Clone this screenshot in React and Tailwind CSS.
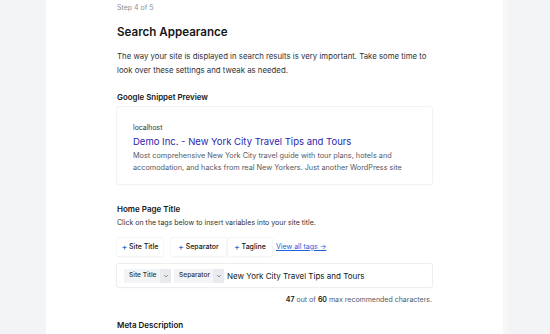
export default function App() {
  return (
    <div
      className="flex h-[334px] w-[550px] overflow-hidden bg-[#f3f4f6]"
      style={{ fontFamily: 'Inter, "Liberation Sans", sans-serif' }}
    >
      <div className="ml-[46px] w-[457px] shrink-0 bg-white pl-[71px] pt-[3px]">
        <div className="w-[315px]">
          <p className="text-[7px] leading-[10px] text-[#8a8f98]">Step 4 of 5</p>
          <h1 className="mt-[11px] text-[11.6px] font-semibold leading-[16px] text-[#141618]">Search Appearance</h1>
          <p className="mt-[9px] text-[7.8px] leading-[14px] text-[#2f3237]">
            The way your site is displayed in search results is very important. Take some time to look over these settings and tweak as needed.
          </p>

          <h2 className="mt-[15px] text-[7.9px] font-semibold leading-[10px] text-[#141618]">Google Snippet Preview</h2>
          <div className="mt-[5px] h-[77px] rounded-[2px] px-[16px] pt-[16px] shadow-[0_0_0_1px_#f2f3f5,0_1px_3px_rgba(0,0,0,0.03)]">
            <p className="text-[6.9px] leading-[10px] text-[#2f3237]">localhost</p>
            <p className="mt-[1.5px] text-[9.5px] leading-[13px] text-[#2a1fb0]">Demo Inc. - New York City Travel Tips and Tours</p>
            <p className="mt-[2.5px] text-[7.3px] leading-[12px] text-[#55595f]">
              Most comprehensive New York City travel guide with tour plans, hotels and accomodation, and hacks from real New Yorkers. Just another WordPress site
            </p>
          </div>

          <h2 className="mt-[20px] text-[8px] font-semibold leading-[10px] text-[#141618]">Home Page Title</h2>
          <p className="mt-[4px] text-[7px] leading-[10px] text-[#2f3237]">Click on the tags below to insert variables into your site title.</p>

          <div className="mt-[10px] flex items-center">
            <Tag label="Site Title" w="w-[46px]" />
            <Tag label="Separator" w="w-[55px] ml-[8px]" />
            <Tag label="Tagline" w="w-[44px] ml-[2px]" />
            <span className="ml-[4px] text-[7px] text-[#1b64d8] underline">View all tags →</span>
          </div>

          <div className="mt-[8px] flex h-[23px] items-center rounded-[2px] pl-[7px] shadow-[0_0_0_1px_#eceef1,0_1px_2px_rgba(0,0,0,0.05)]">
            <Chip label="Site Title" w="w-[47px]" />
            <Chip label="Separator" w="w-[50px] ml-[3px]" />
            <span className="ml-[3px] text-[8px] text-[#141618]">New York City Travel Tips and Tours</span>
          </div>

          <p className="mt-[8px] text-right text-[7px] leading-[10px] text-[#55595f]">
            <span className="font-semibold text-[#141618]">47</span> out of <span className="font-semibold text-[#141618]">60</span> max recommended characters.
          </p>

          <h2 className="mt-[15px] text-[8px] font-semibold leading-[10px] text-[#141618]">Meta Description</h2>
        </div>
      </div>
      <div className="w-[5px] shrink-0 bg-[#f7f7f8]" />
    </div>
  );
}

function Tag({ label, w }) {
  return (
    <span
      className={`flex h-[18px] items-center justify-center rounded-[2px] bg-white text-[7px] font-medium text-[#141618] shadow-[0_0_0_1px_#f4f5f6,0_1px_3px_rgba(0,0,0,0.05)] ${w}`}
    >
      <span className="mr-[2px] text-[8px] font-semibold text-[#1b64d8]">+</span>
      {label}
    </span>
  );
}

function Chip({ label, w }) {
  return (
    <span className={`flex h-[14px] items-center justify-between bg-[#f3f4f6] pl-[5px] text-[6.6px] font-medium text-[#2f3237] ${w}`}>
      <span>{label}</span>
      <span className="flex h-full w-[11px] items-center justify-center bg-[#e8eaed]">
        <svg viewBox="0 0 10 10" className="h-[6px] w-[6px]" fill="none" stroke="#6b7280" strokeWidth="1.4" strokeLinecap="round">
          <path d="M2.5 4l2.5 2.5L7.5 4" />
        </svg>
      </span>
    </span>
  );
}
